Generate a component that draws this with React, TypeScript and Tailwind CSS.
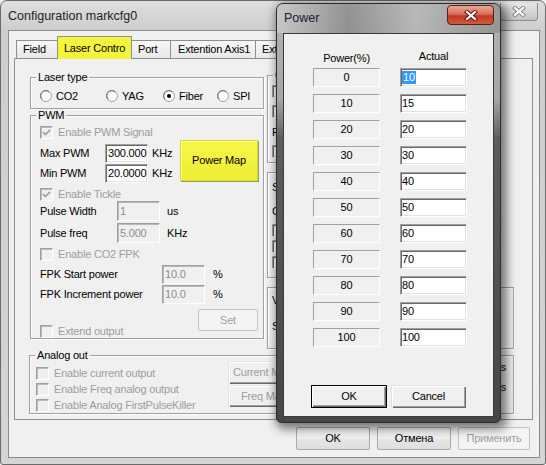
import React from 'react';

const SUNKEN =
  'border border-t-[#a0a0a0] border-l-[#a0a0a0] border-b-white border-r-white shadow-[inset_1px_1px_0_#696969,inset_-1px_-1px_0_#e3e3e3]';
const SUNKEN_OFF =
  'border border-t-[#a0a0a0] border-l-[#a0a0a0] border-b-white border-r-white shadow-[inset_1px_1px_0_#b9b9b9]';
const GRAY = 'text-[#9d9d9d]';

function GroupBox({ label, className = '', children }: { label?: string; className?: string; children?: React.ReactNode }) {
  return (
    <div className={`relative border border-[#a0a0a0] shadow-[inset_1px_1px_0_#fff,1px_1px_0_#fff] ${className}`}>
      {label && (
        <span className="absolute -top-[7px] left-[5px] px-[2px] bg-[#f0f0f0] leading-[13px] whitespace-nowrap">{label}</span>
      )}
      {children}
    </div>
  );
}

function Check({ label, checked = false, enabled = false }: { label?: string; checked?: boolean; enabled?: boolean }) {
  return (
    <div className="flex items-center h-[13px] whitespace-nowrap">
      <span
        className={`w-[13px] h-[13px] shrink-0 flex items-center justify-center ${
          enabled ? `bg-white ${SUNKEN}` : `bg-[#f0f0f0] ${SUNKEN_OFF}`
        }`}
      >
        {checked && (
          <svg width="9" height="9" viewBox="0 0 9 9">
            <path d="M1 4.2 L3.4 6.6 L8 1.8" stroke={enabled ? '#000' : '#a0a0a0'} strokeWidth="1.7" fill="none" />
          </svg>
        )}
      </span>
      {label && <span className={`ml-[5px] ${enabled ? '' : GRAY}`}>{label}</span>}
    </div>
  );
}

function Radio({ label, checked = false, className = '' }: { label: string; checked?: boolean; className?: string }) {
  return (
    <div className={`flex items-center h-[12px] whitespace-nowrap ${className}`}>
      <svg width="12" height="12" viewBox="0 0 12 12" className="shrink-0">
        <circle cx="6" cy="6" r="5.5" fill="#fff" stroke="#a0a0a0" />
        <path d="M2.2 9.3 A4.6 4.6 0 0 1 9.3 2.2" stroke="#696969" strokeWidth="1" fill="none" />
        {checked && <circle cx="6" cy="6" r="2" fill="#000" />}
      </svg>
      <span className="ml-[4px]">{label}</span>
    </div>
  );
}

function Field({ value, disabled = false, className = '' }: { value: string; disabled?: boolean; className?: string }) {
  return (
    <div
      className={`flex items-center overflow-hidden whitespace-nowrap pl-[2px] ${
        disabled ? `bg-[#f0f0f0] text-[#8d8d8d] ${SUNKEN_OFF}` : `bg-white ${SUNKEN}`
      } ${className}`}
    >
      {value}
    </div>
  );
}

function Row({ label, lw, value, unit, ul, h, disabled = false }: { label: string; lw: string; value: string; unit: string; ul: string; h: string; disabled?: boolean }) {
  return (
    <div className={`flex items-center ${h}`}>
      <span className={`${lw} shrink-0 whitespace-nowrap`}>{label}</span>
      <Field value={value} disabled={disabled} className={`w-[43px] h-full ${disabled ? '' : 'pl-[1px]'}`} />
      <span className={`${ul} whitespace-nowrap`}>{unit}</span>
    </div>
  );
}

function Classic({ children, className = '', def = false, disabled = false }: { children: React.ReactNode; className?: string; def?: boolean; disabled?: boolean }) {
  return (
    <div
      className={`flex items-center justify-center bg-[#f0f0f0] whitespace-nowrap ${
        def
          ? 'border border-black shadow-[inset_1px_1px_0_#fff,inset_-1px_-1px_0_#696969,inset_-2px_-2px_0_#a0a0a0]'
          : 'shadow-[inset_1px_1px_0_#e3e3e3,inset_2px_2px_0_#fff,inset_-1px_-1px_0_#696969,inset_-2px_-2px_0_#a0a0a0]'
      } ${disabled ? GRAY : ''} ${className}`}
    >
      {children}
    </div>
  );
}

function Themed({ children, className = '', disabled = false }: { children: React.ReactNode; className?: string; disabled?: boolean }) {
  return (
    <div
      className={`flex items-center justify-center rounded-[2px] border whitespace-nowrap ${
        disabled
          ? 'border-[#c2c2c2] bg-[#f4f4f4] text-[#a0a0a0]'
          : 'border-[#a9a9a9] bg-[linear-gradient(180deg,#f7f7f7_0%,#efefef_50%,#e6e6e6_51%,#dedede_100%)]'
      } ${className}`}
    >
      {children}
    </div>
  );
}

function CloseX({ outline }: { outline: string }) {
  return (
    <svg width="14" height="11" viewBox="0 0 14 11">
      <path d="M3 2 L11 9 M11 2 L3 9" stroke={outline} strokeWidth="4.2" strokeLinecap="square" />
      <path d="M3 2 L11 9 M11 2 L3 9" stroke="#fff" strokeWidth="2.2" strokeLinecap="square" />
    </svg>
  );
}

function Tab({ children, className = '' }: { children: React.ReactNode; className?: string }) {
  return (
    <div
      className={`h-[18px] flex items-center pl-[6px] -ml-px border border-b-0 border-[#8e8f8f] bg-[linear-gradient(180deg,#f6f6f6,#e9e9e9)] whitespace-nowrap overflow-hidden ${className}`}
    >
      {children}
    </div>
  );
}

const ROWS = [
  ['0', '10'],
  ['10', '15'],
  ['20', '20'],
  ['30', '30'],
  ['40', '40'],
  ['50', '50'],
  ['60', '60'],
  ['70', '70'],
  ['80', '80'],
  ['90', '90'],
  ['100', '100'],
];

function MainWindow() {
  return (
    <div className="flex flex-col w-[546px] h-[465px] rounded-t-[7px] rounded-b-[3px] border border-[#6a6a6a] bg-[linear-gradient(180deg,#dedede_0px,#cecece_29px,#d5d5d5_100%)]">
      {/* title bar */}
      <div className="flex h-[29px] shrink-0 items-start justify-between">
        <span className="pl-[7px] pt-[8px] text-[12.5px] leading-[15px] tracking-normal text-[#222]">Configuration markcfg0</span>
        <div className="mt-[2px] mr-[7px] w-[38px] h-[18px] flex items-center justify-center rounded-b-[4px] border border-t-0 border-[#8d8d8d] bg-[linear-gradient(180deg,#e6e6e6,#c4c4c4)]">
          <CloseX outline="#8a8a8a" />
        </div>
      </div>

      {/* client */}
      <div className="ml-[7px] mr-[5px] mb-[6px] flex-1 border border-[#8a8a8a] bg-[#f0f0f0] flex flex-col">
        <div className="pt-[5px]">
          <div className="relative z-10 flex items-end h-[22px] pl-[8px]">
            <Tab className="w-[42px]">Field</Tab>
            <div className="-ml-px w-[75px] h-[23px] -mb-px flex items-center justify-center border border-b-0 border-[#8e8f8f] bg-[#f4f43c] whitespace-nowrap">
              Laser Contro
            </div>
            <Tab className="w-[40px]">Port</Tab>
            <Tab className="w-[86px] pl-[7px]">Extention Axis1</Tab>
            <Tab className="w-[84px]">Extention Axis2</Tab>
          </div>
          <div className="ml-[5px] w-[519px] h-[362px] border border-[#8e8f8f] bg-[#f0f0f0] flex flex-col">
            <div className="flex items-start">
              {/* left column */}
              <div className="ml-[15px] w-[234px] pt-[18px] flex flex-col">
                <GroupBox label="Laser type" className="h-[32px]">
                  <div className="flex pt-[12px] pl-[9px]">
                    <Radio label="CO2" className="w-[66px]" />
                    <Radio label="YAG" className="w-[57px]" />
                    <Radio label="Fiber" checked className="w-[54px]" />
                    <Radio label="SPI" />
                  </div>
                </GroupBox>
                <GroupBox label="PWM" className="mt-[6px] h-[224px]">
                  <div className="flex flex-col pl-[9px]">
                    <div className="mt-[10px]">
                      <Check label="Enable PWM Signal" checked />
                    </div>
                    <div className="mt-px flex items-start">
                      <div className="w-[140px] pt-[4px] flex flex-col gap-px">
                        <Row label="Max PWM" lw="w-[65px]" value="300.000" unit="KHz" ul="ml-[4px]" h="h-[19px]" />
                        <Row label="Min PWM" lw="w-[65px]" value="20.0000" unit="KHz" ul="ml-[4px]" h="h-[19px]" />
                      </div>
                      <div className="w-[78px] h-[41px] flex items-center justify-center bg-[linear-gradient(180deg,#f6f64a,#eeee34)] border border-[#d6d62c] shadow-[1px_1px_0_#9a9a6a,inset_1px_1px_0_#fbfb9a]">
                        Power Map
                      </div>
                    </div>
                    <div className="mt-[5px]">
                      <Check label="Enable Tickle" checked />
                    </div>
                    <Row label="Pulse Width" lw="w-[77px]" value="1" unit="us" ul="ml-[7px]" h="h-[20px]" disabled />
                    <div className="mt-[2px]">
                      <Row label="Pulse freq" lw="w-[77px]" value="5.000" unit="KHz" ul="ml-[7px]" h="h-[20px]" disabled />
                    </div>
                    <div className="mt-[5px]">
                      <Check label="Enable CO2 FPK" />
                    </div>
                    <div className="mt-[4px]">
                      <Row label="FPK Start power" lw="w-[122px]" value="10.0" unit="%" ul="ml-[8px]" h="h-[19px]" disabled />
                    </div>
                    <div className="mt-px">
                      <Row label="FPK Increment power" lw="w-[122px]" value="10.0" unit="%" ul="ml-[8px]" h="h-[19px]" disabled />
                    </div>
                    <div className="mt-[5px] flex items-start">
                      <div className="w-[158px] mt-[16px]">
                        <Check label="Extend output" />
                      </div>
                      <Themed disabled className="w-[60px] h-[22px]">Set</Themed>
                    </div>
                  </div>
                </GroupBox>
              </div>

              {/* right column (mostly under the Power dialog) */}
              <div className="ml-[3px] w-[247px] pt-[16px] flex flex-col">
                <GroupBox label="Out" className="h-[88px] w-[226px]">
                  <div className="flex flex-col pl-[4px]">
                    <div className="mt-[9px]"><Check enabled /></div>
                    <div className="mt-[7px]"><Check enabled /></div>
                    <div className="mt-[8px] h-[13px]">Fr</div>
                    <div className="mt-[6px]"><Check enabled /></div>
                  </div>
                </GroupBox>
                <GroupBox className="mt-[9px] h-[106px] w-[226px]">
                  <div className="flex flex-col pl-[4px]">
                    <div className="mt-[8px] h-[13px]">St</div>
                    <div className="mt-[11px] h-[13px]">Cu</div>
                    <div className="mt-[6px]"><Check enabled /></div>
                    <div className="mt-[3px]"><Check enabled /></div>
                    <div className="mt-[3px]"><Check enabled /></div>
                  </div>
                </GroupBox>
                <GroupBox className="mt-[9px] h-[62px]">
                  <div className="flex flex-col pl-[4px]">
                    <div className="mt-[6px] h-[13px]">Vo</div>
                    <div className="mt-[13px] h-[13px]">Se</div>
                  </div>
                </GroupBox>
              </div>
            </div>

            <GroupBox label="Analog out" className="ml-[14px] mt-[6px] w-[485px] h-[59px]">
              <div className="flex">
                <div className="pl-[6px] pt-[9px] w-[198px] flex flex-col">
                  <div className="h-[16px] flex items-center"><Check label="Enable current output" /></div>
                  <div className="h-[16px] flex items-center"><Check label="Enable Freq analog output" /></div>
                  <div className="h-[16px] flex items-center"><Check label="Enable Analog FirstPulseKiller" /></div>
                </div>
                <div className="pt-[5px] flex flex-col gap-px">
                  <Classic disabled className="w-[80px] h-[23px] justify-start pl-[5px]">Current Map</Classic>
                  <Classic disabled className="w-[80px] h-[22px] justify-start pl-[13px]">Freq Map</Classic>
                </div>
                <div className="flex-1 pr-[7px] pt-px flex flex-col items-end">
                  <div className="h-[20px] flex items-center">Maps</div>
                  <div className="h-[20px] flex items-center">Maps</div>
                </div>
              </div>
            </GroupBox>
          </div>
        </div>

        <div className="mt-[7px] flex justify-end gap-[7px] pr-[9px]">
          <Themed className="w-[74px] h-[23px]">OK</Themed>
          <Themed className="w-[74px] h-[23px]">Отмена</Themed>
          <Themed disabled className="w-[72px] h-[23px]">Применить</Themed>
        </div>
      </div>
    </div>
  );
}

function PowerDialog() {
  return (
    <div className="absolute z-20 left-[276px] top-[3px] w-[225px] h-[420px] flex flex-col rounded-t-[7px] rounded-b-[5px] border border-[#2b2b2b] bg-[linear-gradient(180deg,#b4b4b4_0px,#a6a6a6_95px,#5c5c5c_135px,#464646_100%)] shadow-[3px_3px_10px_3px_rgba(0,0,0,0.5)]">
      <div className="h-[29px] shrink-0 flex items-start justify-between rounded-t-[6px] bg-[linear-gradient(90deg,rgba(255,255,255,0.28)_0%,rgba(0,0,0,0.18)_32%,rgba(255,255,255,0.08)_62%,rgba(0,0,0,0.15)_100%)]">
        <span className="pl-[7px] pt-[7px] text-[12.5px] leading-[15px] tracking-normal text-[#1b1b35]">Power</span>
        <div className="mt-px mr-[6px] w-[47px] h-[20px] flex items-center justify-center rounded-[4px] border border-[#5a2015] bg-[linear-gradient(180deg,#e9a898_0%,#d7705a_45%,#c4381f_55%,#d05a3c_100%)]">
          <CloseX outline="#5a1c12" />
        </div>
      </div>
      <div className="mx-[6px] mb-[5px] flex-1 border border-[#3a3a3a] bg-[#f0f0f0]">
        <div className="pl-[29px] pt-[16px]">
          <div className="grid grid-cols-[67px_67px] gap-x-[20px] h-[14px] items-center">
            <span className="text-center">Power(%)</span>
            <span className="text-center mb-[3px]">Actual</span>
          </div>
          <div className="mt-[4px] grid grid-cols-[67px_67px] gap-x-[20px] gap-y-[7px]">
            {ROWS.map(([p, a], i) => (
              <React.Fragment key={p}>
                <div className="h-[19px] flex items-center justify-center border border-t-[#a0a0a0] border-l-[#a0a0a0] border-b-white border-r-white">
                  {p}
                </div>
                <div className={`h-[19px] flex items-center pl-[1px] bg-white ${SUNKEN}`}>
                  {i === 0 ? <span className="bg-[#3399ff] text-white px-px">{a}</span> : a}
                </div>
              </React.Fragment>
            ))}
          </div>
          <div className="mt-[38px] -ml-[2px] flex gap-[4px]">
            <Classic def className="w-[76px] h-[23px]">OK</Classic>
            <Classic className="w-[75px] h-[23px]">Cancel</Classic>
          </div>
        </div>
      </div>
    </div>
  );
}

export default function App() {
  return (
    <div className="relative w-[546px] h-[465px] overflow-hidden bg-[#f0f0f0] font-['Liberation_Sans',Arial,sans-serif] text-[11px] leading-[13px] tracking-[-0.2px] text-black">
      <MainWindow />
      <PowerDialog />
    </div>
  );
}
